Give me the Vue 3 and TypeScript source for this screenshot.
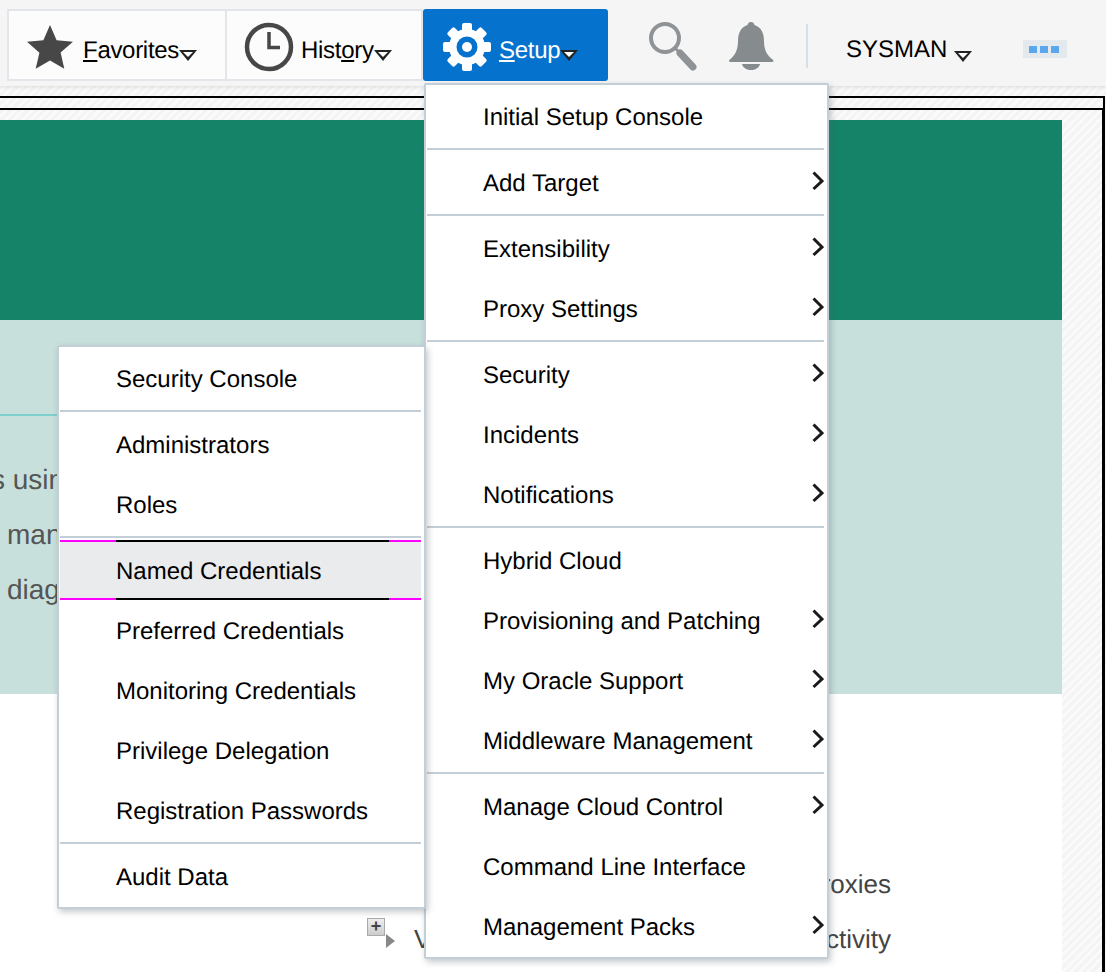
<script setup lang="ts">
interface MenuItem {
  label: string
  sub?: boolean
  active?: boolean
}

const setupGroups: MenuItem[][] = [
  [{ label: 'Initial Setup Console' }],
  [{ label: 'Add Target', sub: true }],
  [
    { label: 'Extensibility', sub: true },
    { label: 'Proxy Settings', sub: true },
  ],
  [
    { label: 'Security', sub: true },
    { label: 'Incidents', sub: true },
    { label: 'Notifications', sub: true },
  ],
  [
    { label: 'Hybrid Cloud' },
    { label: 'Provisioning and Patching', sub: true },
    { label: 'My Oracle Support', sub: true },
    { label: 'Middleware Management', sub: true },
  ],
  [
    { label: 'Manage Cloud Control', sub: true },
    { label: 'Command Line Interface' },
    { label: 'Management Packs', sub: true },
  ],
]

const securityGroups: MenuItem[][] = [
  [{ label: 'Security Console' }],
  [{ label: 'Administrators' }, { label: 'Roles' }],
  [
    { label: 'Named Credentials', active: true },
    { label: 'Preferred Credentials' },
    { label: 'Monitoring Credentials' },
    { label: 'Privilege Delegation' },
    { label: 'Registration Passwords' },
  ],
  [{ label: 'Audit Data' }],
]

const menus = [
  { cls: 'setup-menu', groups: setupGroups },
  { cls: 'security-menu', groups: securityGroups },
]
</script>

<template>
  <div class="page">
    <header class="topbar">
      <div class="tabs">
        <div class="tab">
          <svg class="icon" width="50" height="50" viewBox="0 0 50 50">
            <path d="M24 3l6.600 15.200 16.400 1.500-12.400 10.900 3.700 16.100L24 38.400l-14.300 8.400 3.700-16.100L1 19.700l16.400-1.500z" fill="#474747" />
          </svg>
          <span class="tab-label"><u>F</u>avorites</span>
          <span class="caret"></span>
        </div>
        <div class="tab">
          <svg class="icon" width="50" height="50" viewBox="0 0 50 50">
            <circle cx="25" cy="25" r="22" fill="none" stroke="#474747" stroke-width="4.500" />
            <path d="M25 10v15.500h11" fill="none" stroke="#474747" stroke-width="3.500" />
          </svg>
          <span class="tab-label">Hist<u>o</u>ry</span>
          <span class="caret"></span>
        </div>
      </div>
      <div class="setup-tab">
        <svg class="gear" width="50" height="50" viewBox="0 0 50 50">
          <g fill="#fff">
            <rect v-for="a in [0, 45, 90, 135]" :key="a" x="20" y="1" width="10" height="48" rx="2" :transform="`rotate(${a} 25 25)`" />
            <circle cx="25" cy="25" r="18" />
          </g>
          <circle cx="25" cy="25" r="10.500" fill="#0572ce" />
          <circle cx="25" cy="25" r="5" fill="#fff" />
        </svg>
        <span class="setup-label"><u>S</u>etup</span>
        <span class="caret"></span>
      </div>
      <svg class="search" width="52" height="50" viewBox="0 0 52 50">
        <circle cx="18" cy="17" r="14" fill="none" stroke="#909396" stroke-width="4" />
        <path d="M28 27l4 4" stroke="#909396" stroke-width="3" />
        <path d="M33 32l13 14" stroke="#909396" stroke-width="7" stroke-linecap="round" />
      </svg>
      <svg class="bell" width="50" height="50" viewBox="0 0 50 50">
        <path d="M24 2c2 0 3 1 3.500 3C34 7 37 13 37 21c0 9 3 14 8 18 2 1.500 2 3-.5 3H4c-2.500 0-2.500-1.500-.5-3C8 35 11 30 11 21c0-8 3-14 9.500-16C21 3 22 2 24 2z" fill="#868b8e" />
        <path d="M15 44h18c-1 4-5 6-9 6s-8-2-9-6z" fill="#868b8e" />
      </svg>
      <span class="divider"></span>
      <div class="user">
        <span>SYSMAN</span>
        <span class="caret"></span>
      </div>
      <div class="more"><i></i><i></i><i></i></div>
    </header>

    <div class="frame">
      <div class="frame-strip"></div>
      <div class="frame-body">
        <div class="content">
          <div class="banner"></div>
          <div class="intro">
            <div class="intro-rule"></div>
            <p class="clipped">s using</p>
            <p class="indent">manage</p>
            <p class="indent">diagnose</p>
          </div>
          <div class="lower">
            <div class="lower-row">
              <span class="tree-icons">
                <span class="plus">+</span>
                <span class="tri"></span>
              </span>
              <span class="lower-left">View</span>
              <span class="lower-right">
                <span>Proxies</span>
                <span>Activity</span>
              </span>
            </div>
          </div>
        </div>
      </div>
    </div>

    <nav v-for="menu in menus" :key="menu.cls" class="menu" :class="menu.cls">
      <section v-for="(group, i) in menu.groups" :key="i" class="group">
        <div v-for="item in group" :key="item.label" class="item" :class="{ active: item.active }">
          <span>{{ item.label }}</span>
          <svg v-if="item.sub" class="chevron" width="12" height="20" viewBox="0 0 12 20">
            <path d="M1.500 1.500l8.500 8.500-8.500 8" fill="none" stroke="#1a1a1a" stroke-width="3" />
          </svg>
        </div>
      </section>
    </nav>
  </div>
</template>

<style>
html,
body {
  margin: 0;
  background: #fff;
}
</style>

<style scoped>
.page {
  position: relative;
  width: 1106px;
  height: 972px;
  overflow: hidden;
  font-family: 'Liberation Sans', Arial, sans-serif;
  text-rendering: geometricPrecision;
  color: #000;
  background: repeating-linear-gradient(135deg, #f4f4f4 0 3px, #fafafa 3px 6px);
}

.topbar {
  position: relative;
  display: flex;
  align-items: flex-start;
  height: 86px;
  box-sizing: border-box;
  padding: 9px 0 0 7px;
  background: #f5f5f5;
  box-shadow: 0 1px 4px rgba(0, 0, 0, 0.12);
}

.tabs {
  display: flex;
  height: 72px;
  box-sizing: border-box;
  border: 2px solid #e2e6ea;
  background: #fcfcfc;
}

.tab {
  display: flex;
  align-items: center;
  box-sizing: border-box;
  height: 68px;
  font-size: 24px;
  letter-spacing: -0.3px;
}

.tab:first-child {
  width: 218px;
  padding-left: 17px;
  border-right: 2px solid #e2e6ea;
}

.tab:last-child {
  width: 194px;
  padding-left: 17px;
}

.icon {
  flex: none;
  margin-top: 3px;
  margin-right: 7px;
}

.tab-label,
.setup-label {
  margin-top: 12px;
}

.caret {
  position: relative;
  flex: none;
  width: 0;
  height: 0;
  margin-top: 21px;
  border-left: 9px solid transparent;
  border-right: 9px solid transparent;
  border-top: 11px solid #222;
}

.caret::after {
  content: '';
  position: absolute;
  left: -5px;
  top: -9px;
  border-left: 5px solid transparent;
  border-right: 5px solid transparent;
  border-top: 5px solid #fff;
}

.setup-tab {
  display: flex;
  align-items: center;
  width: 185px;
  height: 72px;
  box-sizing: border-box;
  padding-left: 19px;
  border-radius: 3px;
  background: #0572ce;
  color: #fff;
  font-size: 24px;
  letter-spacing: -0.3px;
}

.gear {
  flex: none;
  margin-top: 4px;
  margin-right: 7px;
}

.search {
  flex: none;
  margin: 12px 0 0 39px;
}

.bell {
  flex: none;
  margin: 11px 0 0 28px;
}

.divider {
  flex: none;
  width: 2px;
  height: 44px;
  margin: 15px 0 0 29px;
  background: #d5dfe9;
}

.user {
  display: flex;
  align-items: center;
  gap: 7px;
  height: 82px;
  margin-left: 38px;
  font-size: 24px;
}

.user .caret {
  margin-top: 12px;
}

.more {
  display: flex;
  align-items: center;
  gap: 3px;
  width: 44px;
  height: 18px;
  box-sizing: border-box;
  margin: 31px 0 0 51px;
  padding-left: 6px;
  background: #e4e9ee;
}

.more i {
  width: 8px;
  height: 7px;
  background: #5aa7ec;
}

.frame {
  margin-top: 10px;
  margin-right: 1px;
}

.frame-strip {
  height: 10px;
  border-top: 2px solid #000;
  border-bottom: 2px solid #000;
  border-right: 2px solid #000;
}

.frame-body {
  height: 862px;
  padding-top: 10px;
  border-right: 3px solid #000;
  box-sizing: border-box;
}

.content {
  width: 1062px;
}

.banner {
  height: 200px;
  background: #148367;
}

.intro {
  height: 374px;
  box-sizing: border-box;
  padding-top: 94px;
  background: #c7e0dc;
  color: #555;
  font-size: 28px;
  overflow: hidden;
}

.intro-rule {
  width: 60px;
  height: 2px;
  margin-bottom: 49px;
  background: #7fd0cc;
}

.intro p {
  height: 55px;
  margin: 0;
  line-height: 30px;
  white-space: nowrap;
}

.intro .clipped {
  margin-left: -9px;
}

.indent {
  padding-left: 7px;
}

.lower {
  height: 288px;
  box-sizing: border-box;
  padding-top: 175px;
  background: #fff;
  color: #444;
  font-size: 26px;
}

.lower-row {
  display: flex;
  width: 891px;
}

.tree-icons {
  display: flex;
  margin: 49px 0 0 367px;
}

.plus {
  width: 16px;
  height: 16px;
  border: 1px solid #aaa;
  background: linear-gradient(#eee, #ccc);
  color: #444;
  font-size: 18px;
  font-weight: bold;
  line-height: 15px;
  text-align: center;
}

.tri {
  width: 0;
  height: 0;
  margin: 16px 0 0 1px;
  border-top: 7px solid transparent;
  border-bottom: 7px solid transparent;
  border-left: 9px solid #888;
}

.lower-left {
  margin: 55px 0 0 19px;
}

.lower-right {
  display: flex;
  flex-direction: column;
  align-items: flex-end;
  gap: 25px;
  margin-left: auto;
  line-height: 30px;
}

.menu {
  position: absolute;
  box-sizing: border-box;
  padding: 1px 3px 1px 1px;
  border: 2px solid #c3ced6;
  border-radius: 2px;
  background: #fff;
  box-shadow: 2px 3px 6px rgba(90, 100, 110, 0.35);
}

.setup-menu {
  left: 424px;
  top: 83px;
  width: 405px;
}

.security-menu {
  left: 57px;
  top: 345px;
  width: 369px;
}

.group + .group {
  margin-top: 2px;
  padding-top: 2px;
  border-top: 2px solid #c3ced6;
}

.item {
  position: relative;
  display: flex;
  align-items: center;
  box-sizing: border-box;
  height: 60px;
  padding: 4px 0 0 56px;
  font-size: 24px;
}

.item.active {
  background: #eaebed;
}

.item.active::before,
.item.active::after {
  content: '';
  position: absolute;
  left: 0;
  right: 0;
  height: 2px;
  background: linear-gradient(90deg, #f0f 56px, #000 56px, #000 329px, #f0f 329px);
}

.item.active::before {
  top: 0;
}

.item.active::after {
  bottom: 0;
}

.chevron {
  position: absolute;
  right: 0;
  top: 19px;
}
</style>
